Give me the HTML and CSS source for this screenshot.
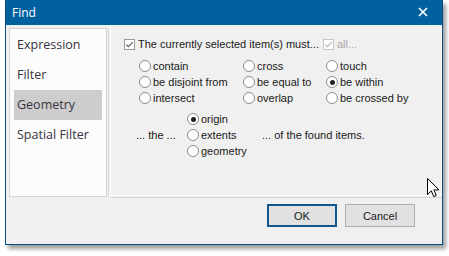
FILE: index.html
```html
<!DOCTYPE html>
<html>
<head>
<meta charset="utf-8">
<link rel="stylesheet" href="styles.css">
</head>
<body>
<div class="window">
  <div class="titlebar">
    <span class="title">Find</span>
    <svg class="close" width="10" height="10" viewBox="0 0 10 10"><path d="M1 1L9 9M9 1L1 9" stroke="#fff" stroke-width="1.7"/></svg>
  </div>
  <div class="main">
    <div class="listbox">
      <div class="item">Expression</div>
      <div class="item">Filter</div>
      <div class="item selected">Geometry</div>
      <div class="item">Spatial Filter</div>
    </div>
    <div class="panel-wrap">
      <div class="panel">
        <div class="check-row">
          <label class="check first">
            <svg class="cb" width="11" height="11" viewBox="0 0 11 11"><rect x="0.5" y="0.5" width="10" height="10" fill="#fff" stroke="#9a9a9a"/><path d="M2.3 5.6L4.4 7.7L8.7 3.2" fill="none" stroke="#5a5a5a" stroke-width="1.2"/></svg>
            <span>The currently selected item(s) must...</span>
          </label>
          <label class="check disabled">
            <svg class="cb" width="11" height="11" viewBox="0 0 11 11"><rect x="0.5" y="0.5" width="10" height="10" fill="#fff" stroke="#c6c6c6"/><path d="M2.3 5.6L4.4 7.7L8.7 3.2" fill="none" stroke="#b4b4b4" stroke-width="1.2"/></svg>
            <span>all...</span>
          </label>
        </div>
        <div class="radio-grid">
          <label class="radio"><span class="dot"></span>contain</label>
          <label class="radio"><span class="dot"></span>cross</label>
          <label class="radio"><span class="dot"></span>touch</label>
          <label class="radio"><span class="dot"></span>be disjoint from</label>
          <label class="radio"><span class="dot"></span>be equal to</label>
          <label class="radio"><span class="dot on"></span>be within</label>
          <label class="radio"><span class="dot"></span>intersect</label>
          <label class="radio"><span class="dot"></span>overlap</label>
          <label class="radio"><span class="dot"></span>be crossed by</label>
        </div>
        <div class="origin-row">
          <span class="the">... the ...</span>
          <div class="origin-col">
            <label class="radio"><span class="dot on"></span>origin</label>
            <label class="radio"><span class="dot"></span>extents</label>
            <label class="radio"><span class="dot"></span>geometry</label>
          </div>
          <span class="found">... of the found items.</span>
        </div>
      </div>
    </div>
  </div>
  <div class="footer">
    <button class="btn default">OK</button>
    <button class="btn">Cancel</button>
  </div>
</div>
<svg class="cursor" width="13" height="20" viewBox="0 0 13 20"><path d="M0.5 0.5L0.5 16.5L4.3 12.9L6.8 18.6L9.3 17.5L6.9 11.9L12 11.9Z" fill="#fff" stroke="#000" stroke-linejoin="round"/></svg>
</body>
</html>
```
FILE: styles.css
```css
* { box-sizing: border-box; }
html, body { margin: 0; padding: 0; background: #fff; }
body {
  width: 449px;
  height: 256px;
  position: relative;
  overflow: hidden;
  font-family: "Liberation Sans", Arial, sans-serif;
}
.window {
  margin-left: 5px;
  width: 438px;
  height: 245px;
  border: 1px solid #0a4c7d;
  border-top: none;
  background: #f0f0f0;
  box-shadow: 3px 4px 4px rgba(0, 0, 0, 0.38);
  display: flex;
  flex-direction: column;
}
.titlebar {
  height: 25px;
  background: #01619f;
  display: flex;
  align-items: center;
  justify-content: space-between;
  padding: 0 14px 0 6px;
  flex: none;
}
.title {
  color: #fff;
  font-family: "Open Sans", "Liberation Sans", sans-serif;
  font-size: 12px;
  margin-top: -1px;
}
.close { display: block; margin-top: -2px; }
.main {
  display: flex;
  height: 173px;
  padding-left: 3px;
  flex: none;
}
.listbox {
  margin-top: 3px;
  width: 98px;
  height: 169px;
  background: #fcfcfc;
  border: 1px solid #d4d4d4;
  box-shadow: 1px 0 0 #f0f0f0, 2px 0 0 #dcdcdc;
  padding: 1px 4px 0 4px;
}
.item {
  height: 30px;
  line-height: 30px;
  padding-left: 3px;
  font-family: "Open Sans", "Liberation Sans", sans-serif;
  font-size: 12.5px;
  color: #3a3340;
}
.item.selected { background: #cdcdcd; }
.panel-wrap {
  margin-left: 3px;
  flex: 1;
  margin-top: 1px;
  height: 172px;
  padding-bottom: 1px;
  border-bottom: 1px solid #d6d6d6;
}
.panel {
  height: 100%;
  border: 1px solid #fff;
  border-top: none;
  padding: 10px 0 0 13px;
  font-size: 11px;
  color: #1a1a1a;
}
.check-row { display: flex; height: 16px; align-items: center; }
.check { display: flex; align-items: center; gap: 3px; }
.check.first { width: 199px; }
.check.disabled { color: #a8a8a8; }
.cb { display: block; flex: none; }
.radio-grid {
  margin: 6px 0 0 15px;
  display: grid;
  grid-template-columns: 104px 83px auto;
  grid-auto-rows: 16px;
}
.radio { display: flex; align-items: center; gap: 2px; height: 16px; white-space: nowrap; }
.dot {
  width: 12px;
  height: 12px;
  border-radius: 50%;
  border: 1px solid #8c8c8c;
  background: #fff;
  flex: none;
  position: relative;
}
.dot.on::after {
  content: "";
  position: absolute;
  left: 2.5px;
  top: 2.5px;
  width: 5px;
  height: 5px;
  border-radius: 50%;
  background: #1f1f1f;
}
.origin-row {
  margin: 5px 0 0 12px;
  display: flex;
  align-items: center;
}
.the { width: 51px; }
.origin-col { width: 75px; display: flex; flex-direction: column; }
.footer {
  display: flex;
  justify-content: flex-end;
  gap: 8px;
  padding: 6px 27px 0 0;
}
.btn {
  width: 70px;
  height: 23px;
  background: #e1e1e1;
  border: 1px solid #adadad;
  font-family: "Liberation Sans", Arial, sans-serif;
  font-size: 11px;
  color: #1a1a1a;
  padding: 0;
  margin: 0;
}
.btn.default { border: 2px solid #13578c; }
.cursor { position: absolute; left: 427px; top: 178px; }
```
